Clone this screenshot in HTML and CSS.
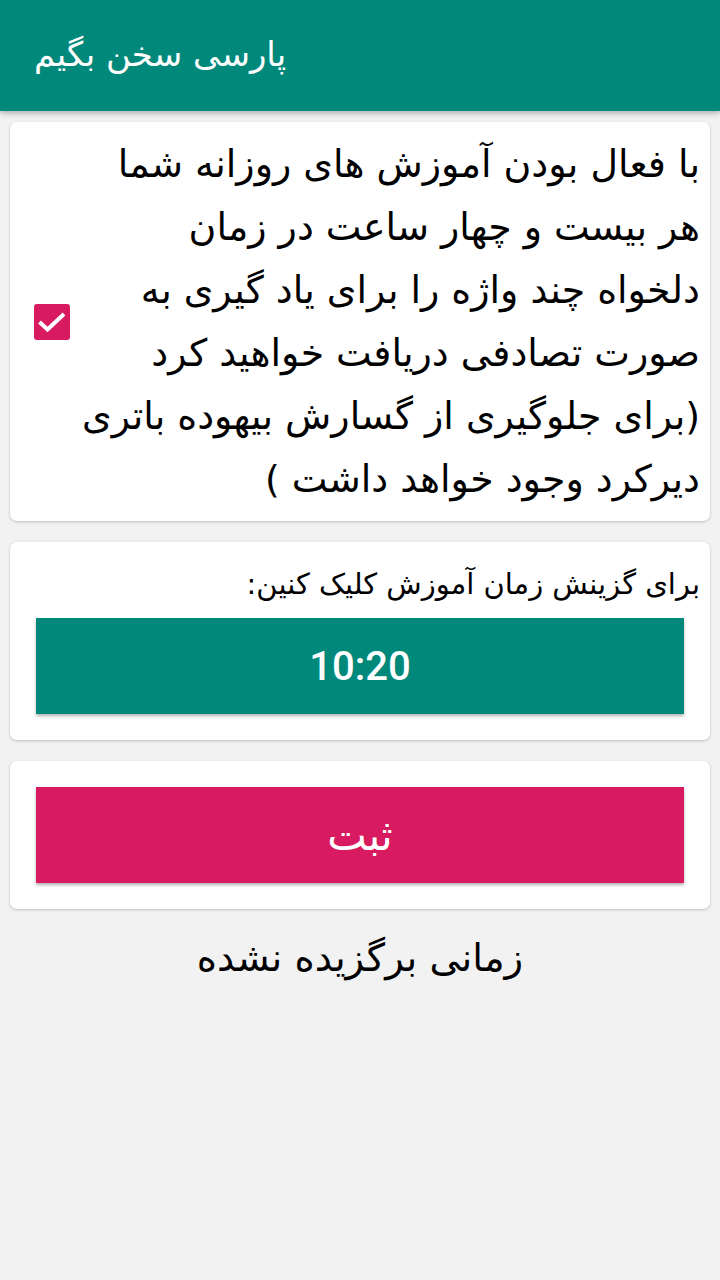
FILE: index.html
```html
<!DOCTYPE html>
<html lang="fa" dir="rtl">
<head>
<meta charset="utf-8">
<link rel="stylesheet" href="styles.css">
</head>
<body>
<header class="appbar"><span class="title">پارسی سخن بگیم</span></header>
<main class="content">
  <section class="card card-info">
    <p class="info-text">با فعال بودن آموزش های روزانه شما<br>هر بیست و چهار ساعت در زمان<br>دلخواه چند واژه را برای یاد گیری به<br>صورت تصادفی دریافت خواهید کرد<br>(برای جلوگیری از گسارش بیهوده باتری<br>دیرکرد وجود خواهد داشت )</p>
    <span class="checkbox"><svg viewBox="0 0 36 36" width="36" height="36"><path d="M5.5 18 L13.5 25.5 L30 10" fill="none" stroke="#fff" stroke-width="4"/></svg></span>
  </section>
  <section class="card card-time">
    <p class="label">برای گزینش زمان آموزش کلیک کنین:</p>
    <button class="btn btn-teal">10:20</button>
  </section>
  <section class="card card-save">
    <button class="btn btn-pink">ثبت</button>
  </section>
  <p class="status">زمانی برگزیده نشده</p>
</main>
</body>
</html>
```
FILE: styles.css
```css
html, body {
  margin: 0;
  padding: 0;
}
body {
  width: 720px;
  height: 1280px;
  background: #f2f2f2;
  font-family: "DejaVu Sans", sans-serif;
  color: #000;
  overflow: hidden;
}
.appbar {
  height: 111px;
  background: #00887a;
  box-shadow: 0 2px 6px rgba(0,0,0,0.3);
  display: flex;
  align-items: center;
  justify-content: flex-end;
  padding-left: 34px;
  position: relative;
  z-index: 1;
}
.title {
  color: #fff;
  font-size: 34px;
  margin-top: -4px;
}
.content {
  padding: 11px 10px 0 10px;
  display: flex;
  flex-direction: column;
  gap: 21px;
}
.card {
  background: #fff;
  border-radius: 7px;
  box-shadow: 0 1px 3px rgba(0,0,0,0.22);
}
.card-info {
  height: 399px;
  display: flex;
  flex-direction: row;
  align-items: center;
  padding: 0 10px 0 24px;
  box-sizing: border-box;
}
.info-text {
  margin: 0;
  flex: 1;
  font-size: 37.9px;
  line-height: 63px;
  text-align: right;
  white-space: nowrap;
}
.checkbox {
  width: 36px;
  height: 36px;
  background: #d81b60;
  border-radius: 3px;
  display: flex;
  margin-right: 10px;
}
.card-time {
  height: 198px;
  box-sizing: border-box;
  padding: 22px 26px 0 26px;
}
.label {
  margin: 0 -16px 14px 0;
  font-size: 29px;
  line-height: 40px;
  text-align: right;
}
.btn {
  display: block;
  width: 100%;
  height: 96px;
  border: none;
  border-radius: 0;
  color: #fff;
  box-shadow: 0 2px 3px rgba(0,0,0,0.3);
  margin: 0;
  padding: 0;
}
.btn-teal {
  background: #00887a;
  font-family: Roboto, sans-serif;
  font-weight: 500;
  font-size: 40px;
}
.card-save {
  height: 148px;
  box-sizing: border-box;
  padding: 26px 26px 0 26px;
}
.btn-pink {
  background: #d81b60;
  font-family: "DejaVu Sans", sans-serif;
  font-size: 42px;
}
.status {
  margin: -2px 0 0 0;
  text-align: center;
  font-size: 38.5px;
  line-height: 60px;
}
```
